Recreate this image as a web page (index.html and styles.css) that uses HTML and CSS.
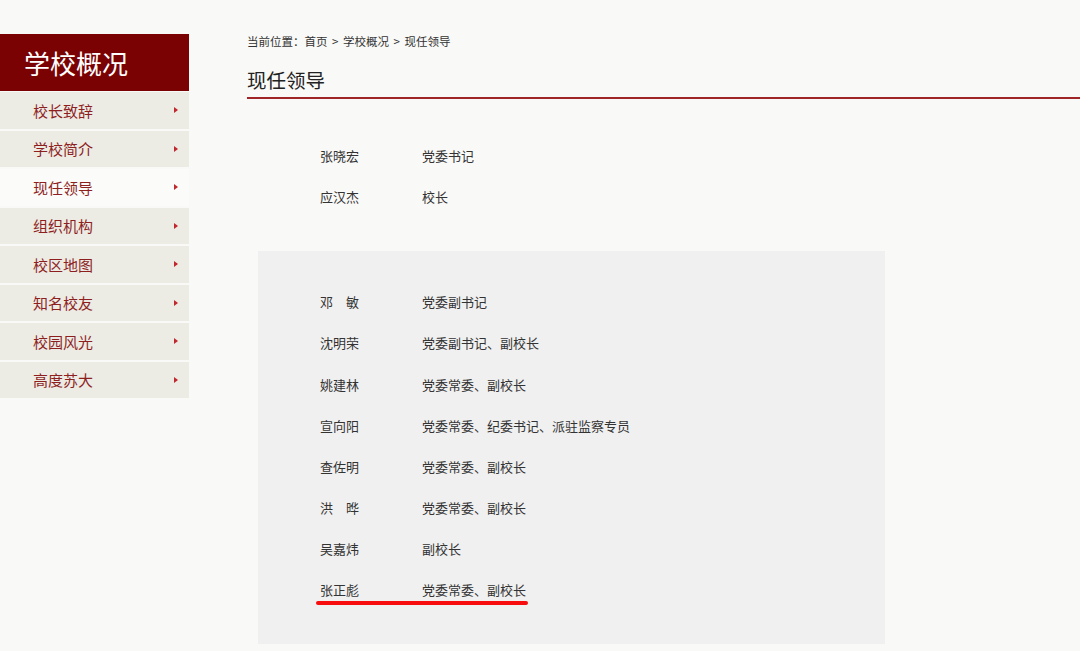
FILE: index.html
```html
<!DOCTYPE html>
<html lang="zh-CN">
<head>
  <meta charset="UTF-8">
  <title>现任领导</title>
  <link rel="stylesheet" href="styles.css">
</head>
<body>
  <div class="page">
    <div class="sidebar">
      <div class="side-title">学校概况</div>
      <ul class="side-menu">
        <li><a href="#">校长致辞</a></li>
        <li><a href="#">学校简介</a></li>
        <li class="active"><a href="#">现任领导</a></li>
        <li><a href="#">组织机构</a></li>
        <li><a href="#">校区地图</a></li>
        <li><a href="#">知名校友</a></li>
        <li><a href="#">校园风光</a></li>
        <li><a href="#">高度苏大</a></li>
      </ul>
    </div>

    <div class="content">
      <div class="crumbs">当前位置：首页 &gt; 学校概况 &gt; 现任领导</div>
      <h2 class="page-title">现任领导</h2>

      <div class="leaders">
        <div class="row"><span class="name">张晓宏</span><span class="post">党委书记</span></div>
        <div class="row"><span class="name">应汉杰</span><span class="post">校长</span></div>
      </div>

      <div class="leaders boxed">
        <div class="row"><span class="name">邓　敏</span><span class="post">党委副书记</span></div>
        <div class="row"><span class="name">沈明荣</span><span class="post">党委副书记、副校长</span></div>
        <div class="row"><span class="name">姚建林</span><span class="post">党委常委、副校长</span></div>
        <div class="row"><span class="name">宣向阳</span><span class="post">党委常委、纪委书记、派驻监察专员</span></div>
        <div class="row"><span class="name">查佐明</span><span class="post">党委常委、副校长</span></div>
        <div class="row"><span class="name">洪　晔</span><span class="post">党委常委、副校长</span></div>
        <div class="row"><span class="name">吴嘉炜</span><span class="post">副校长</span></div>
        <div class="row marked"><span class="name">张正彪</span><span class="post">党委常委、副校长</span></div>
      </div>
    </div>
  </div>
</body>
</html>
```

FILE: styles.css
```css
body {
  margin: 0;
  background-color: #f9f9f7;
  font-family: "Noto Sans CJK SC", "Noto Sans", sans-serif;
  color: #333;
}

.page {
  display: flex;
  align-items: flex-start;
}

.sidebar {
  width: 189px;
  margin-top: 34px;
  flex-shrink: 0;
}

.side-title {
  height: 57px;
  line-height: 57px;
  background-color: #7a0202;
  color: #fff;
  font-size: 26px;
  padding-left: 24px;
  margin-bottom: 1px;
}

.side-menu {
  list-style: none;
  margin: 0;
  padding: 0;
  display: flex;
  flex-direction: column;
  gap: 2px;
}

.side-menu li {
  height: 36.5px;
  background-color: #ecebe4;
}

.side-menu li.active {
  background-color: #fbfbf9;
}

.side-menu a {
  display: flex;
  align-items: center;
  justify-content: space-between;
  height: 100%;
  padding: 0 11px 0 33px;
  color: #8e1f1f;
  font-size: 15px;
  text-decoration: none;
}

.side-menu a::after {
  content: "";
  border-left: 4px solid #c0282d;
  border-top: 3px solid transparent;
  border-bottom: 3px solid transparent;
}

.content {
  flex: 1;
  margin-left: 58px;
  padding-top: 33px;
}

.crumbs {
  font-size: 11.5px;
  word-spacing: 2px;
  line-height: 16px;
  color: #333;
}

.page-title {
  margin: 0;
  font-size: 19.5px;
  font-weight: normal;
  color: #222;
  line-height: 30px;
  padding-top: 16px;
  padding-bottom: 2px;
  border-bottom: 2px solid #a02526;
}

.leaders {
  padding: 36px 0 34px 73px;
}

.leaders.boxed {
  background-color: #f0f0f0;
  width: 565px;
  margin-left: 11px;
  padding: 30px 0 34px 62px;
}

.row {
  display: flex;
  height: 41.15px;
  line-height: 41px;
  font-size: 13px;
  color: #333;
}

.name {
  width: 102px;
}

.row.marked {
  position: relative;
}

.row.marked::after {
  content: "";
  position: absolute;
  left: -4px;
  top: 32px;
  width: 212px;
  height: 4px;
  border-radius: 2px;
  background-color: #f70d0d;
}
```
